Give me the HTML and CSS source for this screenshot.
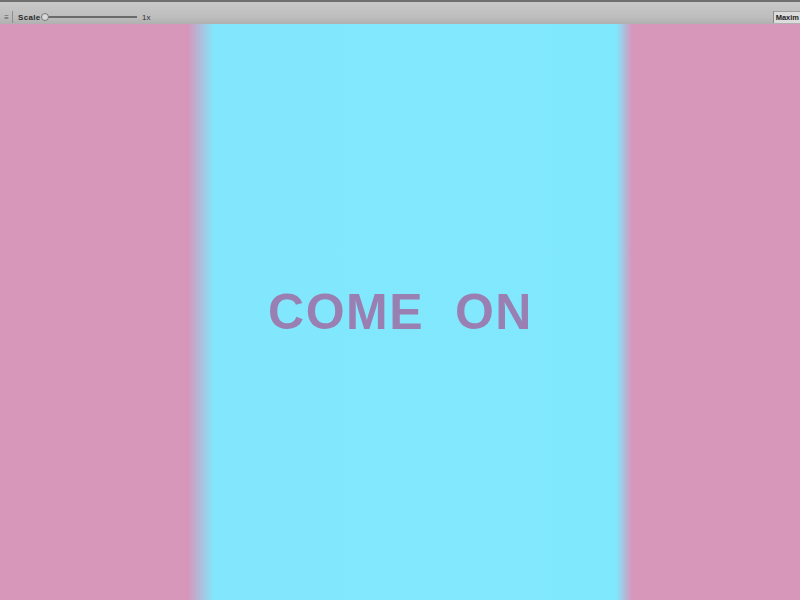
FILE: index.html
```html
<!DOCTYPE html>
<html>
<head>
<meta charset="utf-8">
<link rel="stylesheet" href="styles.css">
</head>
<body>
<div class="app">
  <div class="toolbar">
    <div class="left">
      <span class="grip">&#8801;</span>
      <span class="sep"></span>
      <span class="label">Scale</span>
      <span class="slider"><span class="knob"></span></span>
      <span class="value">1x</span>
    </div>
    <div class="btn">Maxim</div>
  </div>
  <div class="stage">
    <div class="title">COME  ON</div>
  </div>
</div>
</body>
</html>
```
FILE: styles.css
```css
html, body { margin: 0; padding: 0; }
body { width: 800px; height: 600px; overflow: hidden; font-family: "Liberation Sans", Arial, sans-serif; }
.app { display: flex; flex-direction: column; height: 600px; }
.toolbar {
  height: 22px;
  border-top: 2px solid #6f6f6f;
  background: linear-gradient(#c8c8c8, #bdbdbd 70%, #b0b0b0);
  display: flex; align-items: flex-end; justify-content: space-between;
  box-sizing: content-box;
}
.left { display: flex; align-items: center; height: 12px; margin-bottom: 1px; }
.grip { font-size: 8px; color: #555; width: 9px; text-align: right; margin-right: 3px; }
.sep { width: 1px; height: 12px; background: #8d8d8d; margin-right: 5px; }
.label { font-size: 8px; font-weight: bold; color: #2a2a2a; letter-spacing: 0.3px; width: 22px; }
.slider { position: relative; width: 96px; height: 2px; background: #6a6a6a; margin-left: 1px; margin-right: 5px; }
.knob { position: absolute; left: 0; top: -3px; width: 6px; height: 6px; border-radius: 50%; background: #d8d8d8; border: 1px solid #777; }
.value { font-size: 8px; color: #333; }
.btn {
  height: 11px; margin-bottom: 1px;
  background: #dcdcdc; border-left: 1px solid #8a8a8a; border-top: 1px solid #a0a0a0;
  font-size: 7.5px; font-weight: bold; color: #222; line-height: 11px; padding: 0 1px 0 2px; white-space: nowrap;
}
.stage {
  flex: 1;
  background: linear-gradient(to right, #d697bb 0, #d697bb 188px, #82e7fc 214px, #80e8fd 616px, #d697bb 632px, #d697bb 800px);
  display: flex; align-items: center; justify-content: center;
}
.title {
  white-space: pre; font-weight: bold; font-size: 50px; color: #9a80b2;
  margin-top: 0; letter-spacing: 1.5px; padding-left: 1px;
}
```
